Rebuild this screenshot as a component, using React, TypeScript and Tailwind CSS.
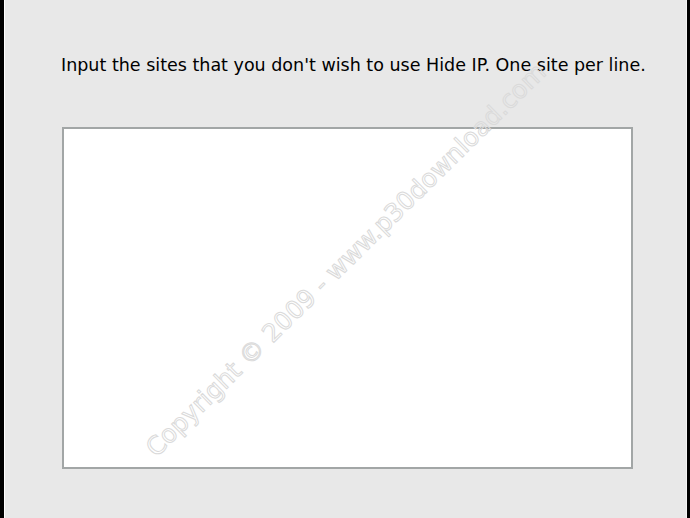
import React from 'react';

const App: React.FC = () => {
  return (
    <div className="w-[690px] h-[518px] flex bg-black overflow-hidden">
      <div className="relative flex-1 ml-[4px] mr-[3px] border-l border-white border-r border-r-[#f4f4f4] bg-[#e8e8e8] font-['DejaVu_Sans',sans-serif]">
        {/* Prompt */}
        <p className="pt-[54px] pl-[56px] text-[17.5px] leading-[22px] text-black whitespace-nowrap">
          Input the sites that you don't wish to use Hide IP. One site per line.
        </p>

        {/* Site list */}
        <div className="mt-[51px] ml-[57px] w-[571px] h-[342px] border-2 border-[#a2a6a6] bg-white" />

        {/* Watermark */}
        <div className="pointer-events-none absolute left-[341px] top-[260px] -translate-x-1/2 -translate-y-1/2 -rotate-[44.5deg] whitespace-nowrap text-[25px] text-transparent [-webkit-text-stroke:1px_#dadada] font-['DejaVu_Sans',sans-serif]">
          Copyright © 2009 - www.p30download.com
        </div>
      </div>
    </div>
  );
};

export default App;
